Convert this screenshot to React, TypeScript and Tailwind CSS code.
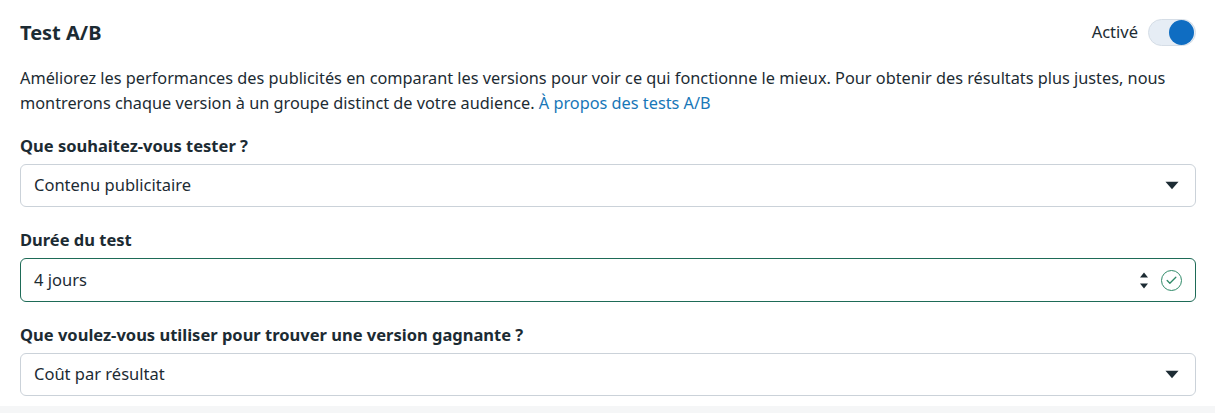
import { Check } from 'lucide-react';

function Caret() {
  return (
    <svg width="14" height="9" viewBox="0 0 14 9" className="text-[#1c2b33]">
      <path d="M0.5 0.8 H13.5 L7 8.2 Z" fill="currentColor" />
    </svg>
  );
}

function Select({ value }: { value: string }) {
  return (
    <div className="flex h-[43px] items-center justify-between rounded-md border border-[#cbd2d9] bg-white pl-[13px] pr-[16px]">
      <span className="text-[16.5px] text-[#1c2b33]">{value}</span>
      <Caret />
    </div>
  );
}

function Label({ children }: { children: React.ReactNode }) {
  return <div className="mb-[8px] text-[16.5px] font-bold leading-5 text-[#1c2b33]">{children}</div>;
}

export default function App() {
  return (
    <div className="min-h-[413px] bg-[#f5f6f7]" style={{ fontFamily: '"Noto Sans", "Open Sans", sans-serif' }}>
      <div className="bg-white pl-5 pr-[19px] pt-[19px] pb-[10px]">
        <div className="flex items-center justify-between">
          <h2 className="text-[20px] font-bold leading-6 text-[#1c2b33]">Test A/B</h2>
          <div className="flex items-center gap-[10px]">
            <span className="text-[16.5px] text-[#1c2b33]">Activé</span>
            <div className="flex h-[27px] w-[48px] items-center justify-end rounded-full border border-[#d5dde6] bg-[#e6edf5] pr-[1px]">
              <div className="h-[25px] w-[25px] rounded-full bg-[#0f6dc2]" />
            </div>
          </div>
        </div>

        <p className="mt-[20px] text-[16.3px] leading-[25px] text-[#1c2b33]">
          Améliorez les performances des publicités en comparant les versions pour voir ce qui fonctionne le mieux. Pour obtenir des résultats plus justes, nous montrerons chaque version à un groupe distinct de votre audience.{' '}
          <a className="text-[#1877b8]">À propos des tests A/B</a>
        </p>

        <div className="mt-[20px]">
          <Label>Que souhaitez-vous tester ?</Label>
          <Select value="Contenu publicitaire" />
        </div>

        <div className="mt-[23px]">
          <Label>Durée du test</Label>
          <div className="flex h-[44px] items-center justify-between rounded-md border border-[#1e6b57] bg-white pl-[13px] pr-[13px]">
            <span className="text-[16.5px] text-[#1c2b33]">4 jours</span>
            <div className="flex items-center gap-[12px]">
              <svg width="10" height="19" viewBox="0 0 10 19" className="text-[#1c2b33]">
                <path d="M1 6.5 L5 1.5 L9 6.5 Z M1 12.5 L5 17.5 L9 12.5 Z" fill="currentColor" />
              </svg>
              <div className="flex h-[21px] w-[21px] items-center justify-center rounded-full border-[1.6px] border-[#2f8a68]">
                <Check size={13} strokeWidth={2.4} className="text-[#2f8a68]" />
              </div>
            </div>
          </div>
        </div>

        <div className="mt-[23px]">
          <Label>Que voulez-vous utiliser pour trouver une version gagnante ?</Label>
          <Select value="Coût par résultat" />
        </div>
      </div>
    </div>
  );
}
